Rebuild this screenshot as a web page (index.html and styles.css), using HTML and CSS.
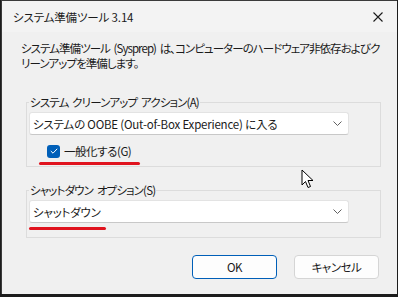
FILE: index.html
```html
<!DOCTYPE html>
<html lang="ja">
<head>
    <meta charset="UTF-8" />
    <title>システム準備ツール 3.14</title>
    <link rel="stylesheet" href="styles.css">
</head>
<body>
    <div class="window">
        <div class="titlebar">
            <span class="title">システム準備ツール 3.14</span>
            <svg class="close" width="10" height="10" viewBox="0 0 10 10">
                <path d="M0.5 0.5 L9.5 9.5 M9.5 0.5 L0.5 9.5" stroke="#1a1a1a" stroke-width="1.1" fill="none" />
            </svg>
        </div>

        <div class="content">
            <p class="desc">システム準備ツール (Sysprep) は、コンピューターのハードウェア非依存およびク<br>リーンアップを準備します。</p>

            <fieldset class="group">
                <legend>システム クリーンアップ アクション(A)</legend>
                <div class="combo">
                    <span>システムの OOBE (Out-of-Box Experience) に入る</span>
                    <svg class="chevron" width="9" height="5" viewBox="0 0 9 5">
                        <path d="M0.5 0.5 L4.5 4.5 L8.5 0.5" stroke="#606060" stroke-width="1" fill="none" />
                    </svg>
                </div>
                <label class="check">
                    <span class="box">
                        <svg width="8" height="6" viewBox="0 0 8 6">
                            <path d="M0.8 3 L3 5.2 L7.2 0.8" stroke="#fff" stroke-width="1" fill="none" />
                        </svg>
                    </span>
                    一般化する(G)
                </label>
                <!-- red annotation -->
                <span class="mark mark-check"></span>
            </fieldset>

            <fieldset class="group group-shutdown">
                <legend>シャットダウン オプション(S)</legend>
                <div class="combo">
                    <span>シャットダウン</span>
                    <svg class="chevron" width="9" height="5" viewBox="0 0 9 5">
                        <path d="M0.5 0.5 L4.5 4.5 L8.5 0.5" stroke="#606060" stroke-width="1" fill="none" />
                    </svg>
                </div>
                <span class="mark mark-shutdown"></span>
            </fieldset>

            <div class="buttons">
                <button class="btn btn-default">OK</button>
                <button class="btn">キャンセル</button>
            </div>
        </div>

        <!-- mouse pointer -->
        <svg class="cursor" width="14" height="21" viewBox="0 0 14 21">
            <path d="M1 1 L1 16 L4.5 12.5 L7 18.5 L9.5 17.5 L7 11.5 L12 11.5 Z" fill="#fff" stroke="#000" stroke-width="1" stroke-linejoin="round" />
        </svg>
    </div>
</body>
</html>
```

FILE: styles.css
```css
/* Global styles */
* {
    box-sizing: border-box;
}

body {
    margin: 0;
    background: #1c1c1c;
    font-family: "Noto Sans CJK JP", "Noto Sans", sans-serif;
    font-size: 11.5px;
    letter-spacing: -0.45px;
    color: #1a1a1a;
    font-feature-settings: "palt";
}

.window {
    position: relative;
    width: 396px;
    height: 294px;
    margin: 0 0 0 1px;
    border-top: 1px solid #3a3a3a;
    border-left: 1px solid #3a3a3a;
    background: #f0f0f0;
    overflow: hidden;
}

.titlebar {
    height: 31px;
    background: #f3f3f3;
    display: flex;
    align-items: center;
    justify-content: space-between;
    padding: 0 12px 0 11px;
}

.title {
    letter-spacing: -0.15px;
}

.close {
    margin-right: 2px;
}

.content {
    padding: 9px 17px 0 19px;
}

.desc {
    margin: 0;
    line-height: 15px;
    white-space: nowrap;
    letter-spacing: -0.95px;
    word-spacing: 2px;
}

/* Group boxes */
.group {
    position: relative;
    margin: 24px 0 0 5px;
    width: 355px;
    padding: 3px 31px 8px 2px;
    border: 1px solid #dcdcdc;
    border-radius: 0;
}

.group legend {
    padding: 0 1px;
    margin-left: 0;
    line-height: 14px;
    letter-spacing: -0.85px;
    word-spacing: 2px;
}

.combo {
    height: 23px;
    background: #fff;
    border: 1px solid #e3e3e3;
    border-bottom-color: #c8c8c8;
    border-radius: 3px;
    display: flex;
    align-items: center;
    justify-content: space-between;
    padding: 0 6px 0 3px;
    letter-spacing: -0.2px;
}

.check {
    display: flex;
    align-items: center;
    gap: 4px;
    margin: 9px 0 0 18px;
    line-height: 14px;
}

.box {
    width: 13px;
    height: 13px;
    border-radius: 3px;
    background: #005fb8;
    display: flex;
    align-items: center;
    justify-content: center;
}

.group-shutdown {
    margin-top: 16px;
    padding-bottom: 14px;
}

/* red annotation strokes */
.mark {
    position: absolute;
    height: 3px;
    background: #e0131e;
    border-radius: 2px;
}

.mark-check {
    left: 12px;
    top: 53px;
    width: 101px;
}

.mark-shutdown {
    left: 2px;
    top: 30px;
    width: 77px;
}

/* Buttons */
.buttons {
    display: flex;
    justify-content: flex-end;
    gap: 17px;
    margin-top: 17px;
    padding-right: 1px;
}

.btn {
    width: 85px;
    height: 24px;
    font-family: inherit;
    font-size: 11.5px;
    letter-spacing: -0.45px;
    font-feature-settings: "palt";
    color: #1a1a1a;
    background: #fdfdfd;
    border: 1px solid #d5d5d5;
    border-radius: 4px;
    padding: 0;
}

.btn-default {
    border-color: #005fb8;
}

.cursor {
    position: absolute;
    left: 299px;
    top: 168px;
}
```
